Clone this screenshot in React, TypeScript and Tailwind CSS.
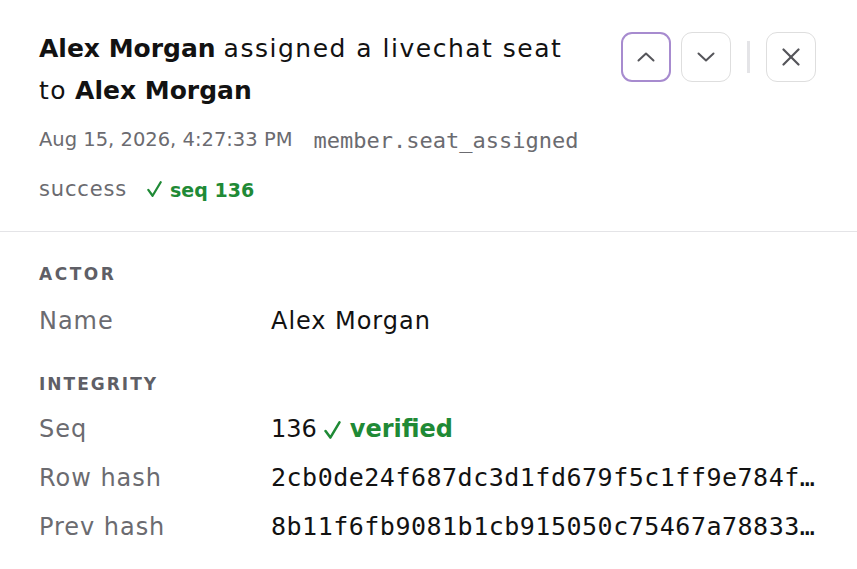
const sans = "font-['DejaVu_Sans','Inter',sans-serif]";
const mono = "font-['DejaVu_Sans_Mono','Liberation_Mono',monospace]";

function IconButton({ children, active }: { children: React.ReactNode; active?: boolean }) {
  return (
    <button
      className={
        active
          ? "w-[50px] h-[50px] flex items-center justify-center rounded-[11px] border-2 border-[#a78bcf] text-[#55555a]"
          : "w-[50px] h-[50px] flex items-center justify-center rounded-[11px] border border-[#dedede] text-[#55555a]"
      }
    >
      {children}
    </button>
  );
}

function Chevron({ up }: { up?: boolean }) {
  return (
    <svg width="18" height="10" viewBox="0 0 18 10" fill="none" stroke="currentColor" strokeWidth="2" strokeLinecap="round" strokeLinejoin="round">
      {up ? <polyline points="1.5,8.5 9,1.5 16.5,8.5" /> : <polyline points="1.5,1.5 9,8.5 16.5,1.5" />}
    </svg>
  );
}

function Close() {
  return (
    <svg width="18" height="18" viewBox="0 0 18 18" fill="none" stroke="currentColor" strokeWidth="2.2" strokeLinecap="round">
      <line x1="1.5" y1="1.5" x2="16.5" y2="16.5" />
      <line x1="16.5" y1="1.5" x2="1.5" y2="16.5" />
    </svg>
  );
}

// check mark drawn as an icon, sits on the text baseline
function Check({ w, h }: { w: number; h: number }) {
  return (
    <svg width={w} height={h} viewBox="0 0 14 15" className="inline-block" fill="none" stroke="currentColor" strokeWidth="2.1" strokeLinecap="round" strokeLinejoin="round">
      <polyline points="1.2,8.3 5.2,13.8 12.8,1.2" />
    </svg>
  );
}

function Row({ label, children }: { label: string; children: React.ReactNode }) {
  return (
    <div className="flex items-center h-[49px]">
      <div className="w-[232px] shrink-0 text-[24px] tracking-[0.04em] text-[#6b6b70]">{label}</div>
      <div className="flex-1 min-w-0">{children}</div>
    </div>
  );
}

export default function App() {
  return (
    <div className={`w-[857px] h-[569px] bg-white overflow-hidden ${sans}`}>
      <header className="flex pl-[39px] pr-[41px] pt-[28px] pb-[26px] border-b border-[#e4e4e7]">
        <div className="flex-1 min-w-0">
          <h2 className="text-[25px] leading-[42px] text-[#121212] max-w-[560px]">
            <span className="font-bold">Alex Morgan</span>{" "}
            <span className="tracking-[0.06em]">assigned a livechat seat to</span>{" "}
            <span className="font-bold">Alex Morgan</span>
          </h2>
          <div className="mt-[13px] flex items-center gap-[21px] h-[30px]">
            <span className="text-[19.5px] text-[#6b6b70]">Aug 15, 2026, 4:27:33 PM</span>
            <span className={`${mono} text-[22px] text-[#6b6b70]`}>member.seat_assigned</span>
          </div>
          <div className="mt-[20px] flex items-center gap-[20px] h-[30px]">
            <span className="text-[21px] tracking-[0.04em] text-[#6b6b70]">success</span>
            <span className="text-[19px] font-bold text-[#1f8a36] flex items-baseline gap-[8px]">
              <Check w={15} h={16} />
              <span>seq 136</span>
            </span>
          </div>
        </div>
        <div className="flex items-center self-start mt-[4px]">
          <IconButton active>
            <Chevron up />
          </IconButton>
          <div className="w-[10px]" />
          <IconButton>
            <Chevron />
          </IconButton>
          <div className="mx-[16px] w-[3px] h-[32px] bg-[#e4e4e7]" />
          <IconButton>
            <Close />
          </IconButton>
        </div>
      </header>
      <section className="pl-[39px] pr-[40px] pt-[30px]">
        <div className="text-[17px] leading-[24px] font-bold tracking-[2.5px] text-[#5f5f66]">ACTOR</div>
        <div className="mt-[10px]">
          <Row label="Name">
            <span className="text-[24px] tracking-[0.04em] text-[#121212]">Alex Morgan</span>
          </Row>
        </div>
        <div className="mt-[27px] text-[17px] leading-[24px] font-bold tracking-[2px] text-[#5f5f66]">INTEGRITY</div>
        <div className="mt-[8px]">
          <Row label="Seq">
            <span className="text-[24px] text-[#121212] flex items-baseline">
              <span>136</span>
              <span className="ml-[7px] mr-[9px] text-[#1f8a36]">
                <Check w={17} h={18} />
              </span>
              <span className="font-bold text-[#1f8a36]">verified</span>
            </span>
          </Row>
          <Row label="Row hash">
            <div className={`${mono} text-[25px] tracking-[0.5px] text-[#121212] truncate`}>
              2cb0de24f687dc3d1fd679f5c1ff9e784f0a6b3e91c2d7f48e5a1b6c09d3e2f7
            </div>
          </Row>
          <Row label="Prev hash">
            <div className={`${mono} text-[25px] tracking-[0.5px] text-[#121212] truncate`}>
              8b11f6fb9081b1cb915050c75467a78833e4d2c1f9a0b7e6d5c4b3a2918f7e6d
            </div>
          </Row>
        </div>
      </section>
    </div>
  );
}
